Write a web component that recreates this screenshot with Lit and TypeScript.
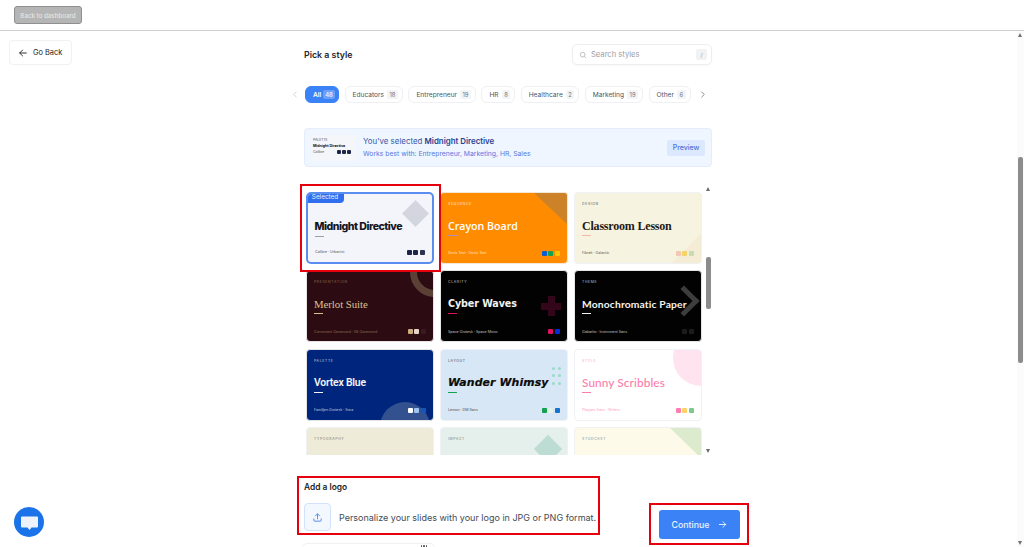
import { LitElement, html, css, svg } from "lit";
import { customElement } from "lit/decorators.js";

interface Card {
  label: string; title: string; fonts: string; cls: string; colors: string[]; deco?: string;
}

const cards: Card[] = [
  { label: "", title: "", fonts: "", cls: "sliver-a", colors: [] },
  { label: "", title: "", fonts: "", cls: "sliver-b", colors: [] },
  { label: "", title: "", fonts: "", cls: "sliver-a", colors: [] },
  { label: "", title: "Midnight Directive", fonts: "Calibre · Urbanist", cls: "midnight", colors: ["#1e2547", "#1e2547", "#2b3350"], deco: "diamond" },
  { label: "SEQUENCE", title: "Crayon Board", fonts: "Dosis Text · Dosis Text", cls: "crayon", colors: ["#0b5bd3", "#12a150", "#ffc400"], deco: "corner" },
  { label: "DESIGN", title: "Classroom Lesson", fonts: "Fibrek · Galactic", cls: "classroom", colors: ["#f4c7b5", "#f6d365", "#c5dcae"], deco: "corner" },
  { label: "PRESENTATION", title: "Merlot Suite", fonts: "Cormorant Garamond · EB Garamond", cls: "merlot", colors: ["#c9ad7a", "#e8d3c8", "#3a1a20"], deco: "ring" },
  { label: "CLARITY", title: "Cyber Waves", fonts: "Space Grotesk · Space Mono", cls: "cyber", colors: ["#e0115f", "#0a2bd6"], deco: "plus" },
  { label: "THEME", title: "Monochromatic Paper", fonts: "Gabarito · Instrument Sans", cls: "mono", colors: ["#1c1c1c", "#1c1c1c"], deco: "chev" },
  { label: "PALETTE", title: "Vortex Blue", fonts: "Familjen Grotesk · Sora", cls: "vortex", colors: ["#ffffff", "#9cc4f2", "#1655b8"], deco: "dome" },
  { label: "LAYOUT", title: "Wander Whimsy", fonts: "Lemon · DM Sans", cls: "wander", colors: ["#12a150", "#e4f3e8", "#1273d0"], deco: "dots" },
  { label: "STYLE", title: "Sunny Scribbles", fonts: "Playpen Sans · Writers", cls: "sunny", colors: ["#ff7eb0", "#ffd166", "#7fc98f"], deco: "circle" },
  { label: "TYPOGRAPHY", title: "", fonts: "", cls: "typo", colors: [] },
  { label: "IMPACT", title: "", fonts: "", cls: "impact", colors: [], deco: "diamond" },
  { label: "STUDCAST", title: "", fonts: "", cls: "stud", colors: [], deco: "corner" },
];

const pills: [string, number][] = [
  ["Educators", 18], ["Entrepreneur", 19], ["HR", 8], ["Healthcare", 2], ["Marketing", 19], ["Other", 6],
];

const arrow = (size: number, color: string) => svg`
  <svg width=${size} height=${size} viewBox="0 0 24 24" fill="none" stroke=${color} stroke-width="2" stroke-linecap="round" stroke-linejoin="round">
    <path d="M5 12h14"/><path d="M13 6l6 6-6 6"/>
  </svg>`;

@customElement("app-root")
export class AppRoot extends LitElement {
  static styles = css`
    :host { display: block; position: relative; width: 1024px; height: 547px; overflow: hidden; background: #fff; font-family: Inter, "Liberation Sans", sans-serif; color: #1f2937; }
    * { box-sizing: border-box; }
    .topbar { height: 31px; border-bottom: 1px solid #cfcfcf; padding: 6px 14px; }
    .back-dash { display: flex; align-items: center; justify-content: center; width: 68px; height: 18px; background: #b5b5b5; border: 1px solid #8f8f8f; border-radius: 3px; color: #e6e6e6; font-size: 6.2px; font-weight: 500; }
    .body { display: flex; }
    .aside { width: 304px; padding: 9px 0 0 9px; }
    .goback { display: flex; align-items: center; gap: 5px; width: 63px; height: 25px; padding-left: 8px; background: #fff; border: 1px solid #f1f1f3; border-radius: 4px; font-size: 7.4px; color: #222; }
    .content { width: 408px; }
    .head { display: flex; align-items: center; justify-content: space-between; height: 21px; margin-top: 13px; }
    .head h1 { margin: 0; font-size: 8.8px; font-weight: 600; color: #1f2430; }
    .search { display: flex; align-items: center; width: 140px; height: 21px; padding: 0 4px 0 6px; gap: 4px; border: 1px solid #eceef1; border-radius: 5px; font-size: 7.6px; color: #9aa0aa; box-shadow: 0 1px 2px rgba(0,0,0,.03); }
    .search span { flex: 1; }
    .search kbd { display: flex; align-items: center; justify-content: center; width: 11px; height: 11px; background: #f1f2f4; border-radius: 2px; font-size: 6px; font-family: inherit; color: #9aa0aa; }
    .pills-row { position: relative; display: flex; align-items: center; gap: 5.5px; height: 17px; margin: 21px 0 0; }
    .pill { display: flex; align-items: center; gap: 3px; height: 17px; padding: 0 4px 0 7px; border: 1px solid #eef0f3; border-radius: 6px; font-size: 6.6px; color: #4b5563; white-space: nowrap; background: #fff; }
    .pill b { font-weight: 400; font-size: 5.8px; background: #f3f4f6; border-radius: 2px; padding: 1px 2.5px; color: #6b7280; }
    .pill.on { background: #3b82f6; border-color: #3b82f6; color: #fff; font-weight: 600; width: 34px; margin-left: 1px; padding: 0 0 0 7px; gap: 2px; }
    .pill.on b { background: #6ba1f8; color: #e8f0ff; padding: 1px 2px; font-weight: 600; }
    .chev { position: absolute; top: 3px; }
    .chev.l { left: -14px; }
    .chev.r { left: 394px; }
    .banner { display: flex; align-items: center; height: 39px; margin-top: 25px; padding: 0 6px; background: #eff6ff; border: 1px solid #e3edfb; border-radius: 4px; }
    .thumb { width: 45px; height: 26px; margin-right: 7px; padding: 3px 2px 0 2px; background: #f5f6fa; border-radius: 2px; font-size: 3.4px; color: #555; display: flex; flex-direction: column; gap: 2px; }
    .thumb .t { font-size: 3.6px; font-weight: 700; color: #111; }
    .thumb .f { display: flex; align-items: center; gap: 1px; justify-content: space-between; padding-right: 3px; }
    .thumb i { display: inline-block; width: 4px; height: 4px; border-radius: 1px; background: #1e2547; margin-left: 1px; }
    .b-text { flex: 1; }
    .b-text .a { font-size: 7.9px; color: #3a57a8; line-height: 12px; }
    .b-text .a b { font-weight: 600; color: #2a3f8f; }
    .b-text .s { font-size: 6.8px; color: #5a78e0; line-height: 12px; margin-top: 1px; }
    .preview { display: flex; align-items: center; justify-content: center; width: 38px; height: 16px; background: #dbe8fd; border-radius: 2px; font-size: 7px; color: #4a72d8; font-weight: 500; }
    .grid-view { position: relative; height: 270px; margin-top: 18px; overflow: hidden; }
    .grid { display: grid; grid-template-columns: repeat(3, 128px); gap: 6.6px 6px; padding-left: 2px; margin-top: -72px; }
    .card { position: relative; height: 72px; border-radius: 4px; overflow: hidden; padding: 8px 7px 0; border: 1px solid #f0f1f5; display: flex; flex-direction: column; }
    .label { font-size: 3.4px; letter-spacing: .7px; height: 6px; line-height: 6px; opacity: .75; }
    .title { font-size: 11px; line-height: 14px; font-weight: 700; margin-top: 12px; white-space: nowrap; position: relative; }
    .rule { width: 9px; height: 1.2px; margin-top: 2px; background: currentColor; }
    .foot { position: absolute; left: 7px; right: 7.5px; bottom: 6.500px; display: flex; justify-content: space-between; align-items: center; height: 6px; font-size: 3.6px; opacity: 1; }
    .foot span { opacity: .75; }
    .sw { display: flex; gap: 1.5px; opacity: 1 !important; }
    .sw i { width: 5px; height: 5px; border-radius: 1px; display: block; }
    .deco { position: absolute; }

    .midnight { background: #f3f5fa; color: #14161f; }
    .midnight .title { letter-spacing: -.5px; font-weight: 800; font-size: 10.6px; }
    .midnight .rule { background: #9aa0aa; }
    .midnight.sel { border: 2px solid #5a8df0; border-radius: 5px; padding-left: 6.500px; }
    .tag { position: absolute; left: -2px; top: -2px; height: 11px; width: 38px; background: #2f6fed; color: #e6efff; font-size: 6.4px; display: flex; align-items: center; justify-content: center; border-radius: 0 0 4px 0; }
    .midnight .deco { right: 7px; top: 10px; width: 19px; height: 19px; background: #d3d6de; transform: rotate(45deg); }
    .crayon { background: #ff8c00; color: #fff; border-color: #f3e8d8; }
    .crayon .title { font-family: "Open Sans", sans-serif; font-weight: 600; font-size: 10.6px; }
    .crayon .rule { background: #a98bc8; }
    .crayon .deco { right: 0; top: 0; width: 0; height: 0; border-top: 31px solid #cc8228; border-left: 33px solid transparent; }
    .classroom { background: #f7f3e1; color: #1c1a17; }
    .classroom .title { font-family: "Liberation Serif", serif; font-size: 12px; letter-spacing: -.2px; }
    .classroom .rule { background: #f0b9a8; }
    .classroom .deco { right: 0; bottom: 0; width: 0; height: 0; border-bottom: 30px solid #f5ecd6; border-left: 29px solid transparent; }
    .merlot { background: #2c0b12; color: #dcc18f; border-color: #e5e5e5; }
    .merlot .title { font-family: "Liberation Serif", serif; font-weight: 400; font-size: 10.8px; letter-spacing: -.05px; }
    .merlot .deco { right: -27px; top: -24px; width: 50px; height: 50px; border: 7px solid #5b4036; border-radius: 50%; }
    .merlot .label, .merlot .foot span { opacity: .5; }
    .cyber { background: #020202; color: #f2f2f2; border-color: #e5e5e5; }
    .cyber .title { font-family: "DejaVu Sans", sans-serif; font-size: 9.6px; font-weight: 600; letter-spacing: -.1px; }
    .cyber .rule { background: #e0115f; }
    .cyber .deco { right: 6px; top: 25px; width: 20px; height: 20px; background:
      linear-gradient(#33061a, #33061a) center/7px 20px no-repeat, linear-gradient(#33061a, #33061a) center/20px 7px no-repeat; }
    .mono { background: #020202; color: #f4f4f4; border-color: #e5e5e5; }
    .mono .title { font-family: Lato, sans-serif; font-size: 10.3px; font-weight: 700; letter-spacing: .15px; }
    .mono .deco { right: 6px; top: 19px; width: 22px; height: 22px; border-top: 5px solid #3d3d3d; border-right: 5px solid #3d3d3d; transform: rotate(45deg); }
    .vortex { background: #00257c; color: #f3f5fb; border-color: #e5e5e5; }
    .vortex .title { font-family: Roboto, sans-serif; font-size: 10.4px; font-weight: 600; letter-spacing: -.2px; }
    .vortex .deco { right: 3px; bottom: -32px; width: 50px; height: 50px; border-radius: 50%; background: #33508f; }
    .wander { background: #d8e7f5; color: #0b0b0b; }
    .wander .title { font-family: "DejaVu Sans", sans-serif; font-weight: 800; font-style: italic; font-size: 10.9px; letter-spacing: .1px; -webkit-text-stroke: .2px #0b0b0b; }
    .wander .rule { background: #12a150; }
    .wander .deco { right: 6px; top: 17px; display: grid; grid-template-columns: repeat(2, 3px); gap: 4.5px 3.5px; }
    .wander .deco i { width: 3px; height: 3px; background: #98dcc6; border-radius: 50%; }
    .sunny { background: #fff; color: #fb7eaa; border: 1px solid #f0f1f5; }
    .sunny .title { font-family: Lato, sans-serif; font-weight: 500; font-size: 11.8px; letter-spacing: .1px; }
    .sunny .deco { right: -28px; top: -20px; width: 56px; height: 56px; border-radius: 50%; background: #ffe3ee; }
    .typo { background: #eeebd9; color: #555; }
    .impact { background: #e5f0ed; color: #555; }
    .impact .deco { right: 9px; top: 11px; width: 20px; height: 20px; background: #bddcd3; transform: rotate(45deg); }
    .stud { background: #fdfae9; color: #4e6a80; }
    .stud .deco { right: 0; top: 0; width: 0; height: 0; border-top: 30px solid #dcebce; border-left: 31px solid transparent; }
    .sliver-a { background: #fdf3ee; }
    .sliver-b { background: #fff; }

    .sb-arrow { position: absolute; left: 401.5px; width: 0; height: 0; border-left: 2.5px solid transparent; border-right: 2.5px solid transparent; }
    .sb-arrow.u { top: 2px; border-bottom: 4px solid #6a6a6a; }
    .sb-arrow.d { bottom: 2px; border-top: 4px solid #6a6a6a; }
    .sb-thumb { position: absolute; left: 402px; top: 72px; width: 5px; height: 52px; background: #8c8c8c; border-radius: 2px; }

    .logo-h { font-size: 8.4px; font-weight: 600; margin-top: 26px; line-height: 12px; color: #222; }
    .logo-row { display: flex; align-items: center; gap: 8px; margin-top: 10px; white-space: nowrap; font-size: 9px; color: #444b55; }
    .up { display: flex; align-items: center; justify-content: center; width: 27px; height: 28px; border: 1px solid #d3e2fb; background: #f3f7fe; border-radius: 4px; }
    .next-card { display: flex; justify-content: flex-end; gap: 1px; width: 133px; height: 20px; margin: 12px 0 0 -2px; padding: 1px 7px 0; border: 1px solid #f0f1f3; border-radius: 5px; }
    .next-card i { width: 1.5px; height: 1.5px; background: #555; border-radius: 50%; }

    .continue { position: absolute; left: 659px; top: 510px; width: 81px; height: 29px; display: flex; align-items: center; justify-content: center; gap: 7px; background: #3b82f6; border-radius: 3px; color: #eaf2ff; font-size: 8.8px; font-weight: 500; }
    .anno { position: absolute; border: 2px solid #e6000e; pointer-events: none; }
    .a1 { left: 300px; top: 184px; width: 141px; height: 88px; }
    .a2 { left: 297px; top: 476px; width: 303px; height: 59px; }
    .a3 { left: 649px; top: 503px; width: 100px; height: 42px; }
    .chat { position: absolute; left: 14px; top: 507px; width: 30px; height: 30px; border-radius: 50%; background: #1a73e8; display: flex; align-items: center; justify-content: center; }
    .page-track { position: absolute; left: 1017px; top: 31px; width: 7px; height: 516px; background: #fbfbfb; }
    .page-up { position: absolute; left: 1018px; top: 33px; width: 0; height: 0; border-left: 2.5px solid transparent; border-right: 2.5px solid transparent; border-bottom: 4px solid #707070; }
    .page-down { position: absolute; left: 1018px; top: 541px; width: 0; height: 0; border-left: 2.5px solid transparent; border-right: 2.5px solid transparent; border-top: 4px solid #707070; }
    .page-sb { position: absolute; left: 1018px; top: 157px; width: 5px; height: 206px; background: #8c8c8c; border-radius: 2px; }
  `;

  private card(c: Card) {
    const selected = c.cls === "midnight";
    return html`
      <div class="card ${c.cls} ${selected ? "sel" : ""}">
        ${c.deco === "dots"
          ? html`<div class="deco">${[0, 1, 2, 3, 4, 5].map(() => html`<i></i>`)}</div>`
          : c.deco ? html`<div class="deco"></div>` : ""}
        ${selected ? html`<div class="tag">Selected</div>` : ""}
        <div class="label">${c.label}</div>
        ${c.title ? html`<div class="title">${c.title}</div><div class="rule"></div>` : ""}
        ${c.fonts ? html`<div class="foot"><span>${c.fonts}</span>
          <div class="sw">${c.colors.map((col) => html`<i style="background:${col}"></i>`)}</div></div>` : ""}
      </div>`;
  }

  render() {
    return html`
      <div class="topbar"><div class="back-dash">Back to dashboard</div></div>
      <div class="body">
        <div class="aside">
          <div class="goback">
            <svg width="10" height="10" viewBox="0 0 24 24" fill="none" stroke="#222" stroke-width="2.2" stroke-linecap="round" stroke-linejoin="round"><path d="M20 12H4"/><path d="M11 5l-7 7 7 7"/></svg>
            Go Back
          </div>
        </div>
        <div class="content">
          <div class="head">
            <h1>Pick a style</h1>
            <div class="search">
              <svg width="8" height="8" viewBox="0 0 24 24" fill="none" stroke="#9aa0aa" stroke-width="2"><circle cx="11" cy="11" r="7"/><path d="M16.5 16.5L21 21"/></svg>
              <span>Search styles</span><kbd>/</kbd>
            </div>
          </div>
          <div class="pills-row">
            <svg class="chev l" width="10" height="11" viewBox="0 0 24 24" fill="none" stroke="#c9ccd2" stroke-width="2" stroke-linecap="round"><path d="M15 6l-6 6 6 6"/></svg>
            <div class="pill on">All <b>48</b></div>
            ${pills.map(([n, c]) => html`<div class="pill">${n} <b>${c}</b></div>`)}
            <svg class="chev r" width="10" height="11" viewBox="0 0 24 24" fill="none" stroke="#777" stroke-width="2" stroke-linecap="round"><path d="M9 6l6 6-6 6"/></svg>
          </div>
          <div class="banner">
            <div class="thumb">
              <div>PALETTE</div>
              <div class="t">Midnight Directive</div>
              <div class="f"><span>Calibre</span><span><i></i><i></i><i></i></span></div>
            </div>
            <div class="b-text">
              <div class="a">You've selected <b>Midnight Directive</b></div>
              <div class="s">Works best with: Entrepreneur, Marketing, HR, Sales</div>
            </div>
            <div class="preview">Preview</div>
          </div>
          <div class="grid-view">
            <div class="grid">${cards.map((c) => this.card(c))}</div>
            <div class="sb-arrow u"></div>
            <div class="sb-thumb"></div>
            <div class="sb-arrow d"></div>
          </div>
          <div class="logo-h">Add a logo</div>
          <div class="logo-row">
            <div class="up">
              <svg width="11" height="11" viewBox="0 0 24 24" fill="none" stroke="#4f86e8" stroke-width="2" stroke-linecap="round" stroke-linejoin="round"><path d="M12 15V4"/><path d="M7.500 8.500L12 4l4.500 4.500"/><path d="M4 15v3a2 2 0 0 0 2 2h12a2 2 0 0 0 2-2v-3"/></svg>
            </div>
            Personalize your slides with your logo in JPG or PNG format.
          </div>
          <div class="next-card"><i></i><i></i><i></i></div>
        </div>
      </div>
      <div class="continue">Continue ${arrow(11, "#eaf2ff")}</div>
      <div class="anno a1"></div><div class="anno a2"></div><div class="anno a3"></div>
      <div class="chat">
        <svg width="19" height="17" viewBox="0 0 19 17"><path fill="#eef3fb" d="M2 2.500h15a1 1 0 0 1 1 1v9a1 1 0 0 1-1 1h-5.500L9.500 16l-2-2.500H2a1 1 0 0 1-1-1v-9a1 1 0 0 1 1-1z"/></svg>
      </div>
      <div class="page-track"></div>
      <div class="page-up"></div>
      <div class="page-down"></div>
      <div class="page-sb"></div>
    `;
  }
}
